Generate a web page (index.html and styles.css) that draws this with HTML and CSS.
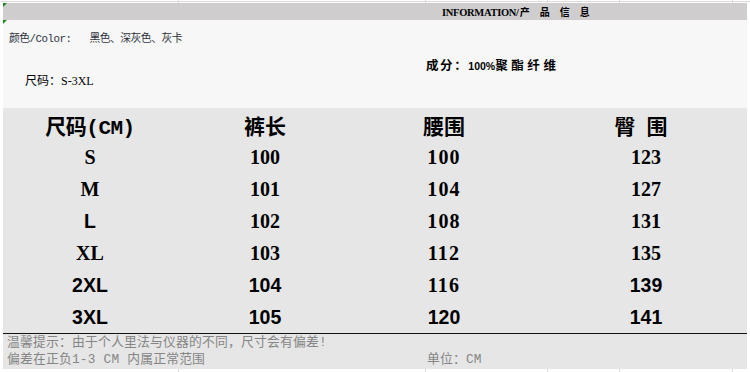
FILE: index.html
```html
<!DOCTYPE html>
<html lang="zh">
<head>
<meta charset="utf-8">
<title>INFORMATION</title>
<link rel="stylesheet" href="styles.css">
</head>
<body>
<div class="sheet">
  <div class="band">
    <span class="band-title">INFORMATION/<span class="cjk-spaced">产品信息</span></span>
  </div>
  <div class="info">
    <div class="info-left">
      <div class="color-line">颜色/Color:&nbsp;&nbsp;&nbsp;黑色、深灰色、灰卡</div>
      <div class="size-line">尺码：S-3XL</div>
    </div>
    <div class="info-right">
      <div class="material">成分：<span class="pct">100%</span><span class="fiber">聚酯纤维</span></div>
    </div>
  </div>
  <div class="table">
    <div class="row head">
      <div class="c1 mono">尺码(CM)</div>
      <div class="c2">裤长</div>
      <div class="c3">腰围</div>
      <div class="c4 hip">臀<span class="gap"></span>围</div>
    </div>
    <div class="row">
      <div class="c1 serif">S</div><div class="c2 serif">100</div><div class="c3 serif wide">100</div><div class="c4 serif">123</div>
    </div>
    <div class="row">
      <div class="c1 serif">M</div><div class="c2 serif">101</div><div class="c3 serif wide">104</div><div class="c4 serif">127</div>
    </div>
    <div class="row">
      <div class="c1 sans">L</div><div class="c2 serif">102</div><div class="c3 serif wide">108</div><div class="c4 serif">131</div>
    </div>
    <div class="row">
      <div class="c1 serif">XL</div><div class="c2 serif">103</div><div class="c3 serif wide">112</div><div class="c4 serif">135</div>
    </div>
    <div class="row">
      <div class="c1 sans">2XL</div><div class="c2 sans">104</div><div class="c3 serif wide">116</div><div class="c4 sans">139</div>
    </div>
    <div class="row">
      <div class="c1 sans">3XL</div><div class="c2 sans">105</div><div class="c3 sans">120</div><div class="c4 sans">141</div>
    </div>
  </div>
  <div class="footer">
    <div class="note">温馨提示：由于个人里法与仪器的不同，尺寸会有偏差!</div>
    <div class="note-row">
      <span class="note">偏差在正负1-3 CM 内属正常范围</span>
      <span class="note unit">单位：CM</span>
    </div>
  </div>
</div>
</body>
</html>
```

FILE: styles.css
```css
html, body {
  margin: 0;
  padding: 0;
}
body {
  width: 750px;
  height: 372px;
  overflow: hidden;
  background-color: #ffffff;
  background-image:
    linear-gradient(#dcdcdc, #dcdcdc),
    linear-gradient(#dcdcdc, #dcdcdc),
    linear-gradient(#dcdcdc, #dcdcdc),
    linear-gradient(#dcdcdc, #dcdcdc),
    linear-gradient(#dcdcdc, #dcdcdc),
    linear-gradient(#dcdcdc, #dcdcdc);
  background-repeat: no-repeat;
  background-size: 1px 372px, 1px 372px, 1px 372px, 1px 372px, 1px 372px, 750px 1px;
  background-position: 178px 0, 425px 0, 547px 0, 619px 0, 732px 0, 0 1px;
  font-family: "Noto Sans CJK SC", sans-serif;
  color: #000;
}
.sheet {
  position: relative;
  margin: 3px 3px 0 3px;
  width: 744px;
}
.sheet::before,
.sheet::after {
  content: "";
  position: absolute;
  left: 0;
  width: 0;
  height: 0;
  border-top: 4px solid #1f8a1f;
  border-right: 4px solid transparent;
}
.sheet::before { top: 0; }
.sheet::after { top: 17px; }

.band {
  height: 17px;
  background: #cfcdce;
  display: flex;
  align-items: center;
  padding-left: 439px;
}
.band-title {
  font-family: "Liberation Serif", "Noto Sans CJK SC", serif;
  font-weight: bold;
  font-size: 10.5px;
  letter-spacing: -0.3px;
  line-height: 17px;
}
.cjk-spaced {
  font-family: "Noto Sans CJK SC", sans-serif;
  font-size: 10px;
  letter-spacing: 10px;
  margin-left: 1px;
}

.info {
  height: 88px;
  background: #f7f7f7;
  display: flex;
}
.info-left {
  width: 420px;
  display: flex;
  flex-direction: column;
}
.color-line {
  margin-top: 11px;
  padding-left: 6px;
  font-family: "Liberation Mono", "Noto Sans CJK SC", monospace;
  font-size: 10.8px;
  line-height: 16px;
  color: #2f3340;
  letter-spacing: -0.5px;
}
.size-line {
  margin-top: 25px;
  padding-left: 22px;
  font-family: "Liberation Serif", "Noto Sans CJK SC", serif;
  font-size: 12px;
  line-height: 18px;
}
.info-right {
  padding-left: 3px;
}
.material {
  margin-top: 36px;
  font-size: 12.5px;
  font-weight: bold;
  line-height: 18px;
  letter-spacing: 1.6px;
}
.pct {
  font-family: "Liberation Sans", sans-serif;
  font-size: 10.5px;
  letter-spacing: 0;
}
.fiber {
  letter-spacing: 3.6px;
}

.table {
  background: #e6e6e6;
  border-bottom: 1.5px solid #111;
  padding-top: 1px;
}
.row {
  display: grid;
  grid-template-columns: 174px 176px 182px 212px;
  height: 32px;
  align-items: center;
  text-align: center;
}
.row.head {
  font-size: 21px;
  font-weight: bold;
}
.row.head .c4 {
  padding-left: 0;
}
.gap {
  display: inline-block;
  width: 11px;
}
.row .c4 {
  padding-left: 10px;
}
.mono {
  font-family: "Liberation Mono", "Noto Sans CJK SC", monospace;
  letter-spacing: -0.5px;
}
.serif {
  font-family: "Liberation Serif", serif;
  font-weight: bold;
  font-size: 20px;
}
.serif.wide {
  letter-spacing: 1.2px;
}
.sans {
  font-family: "Liberation Sans", sans-serif;
  font-weight: bold;
  font-size: 19.5px;
}

.footer {
  height: 35px;
  background: #e6e6e6;
  padding-top: 0;
  box-sizing: border-box;
}
.note {
  font-family: "Liberation Mono", "Noto Sans CJK SC", monospace;
  font-size: 12.8px;
  line-height: 17px;
  color: #858585;
  padding-left: 4px;
  letter-spacing: 0.2px;
}
.note-row {
  display: flex;
}
.note-row .note:first-child {
  width: 420px;
}
.unit {
  padding-left: 0;
}
```
